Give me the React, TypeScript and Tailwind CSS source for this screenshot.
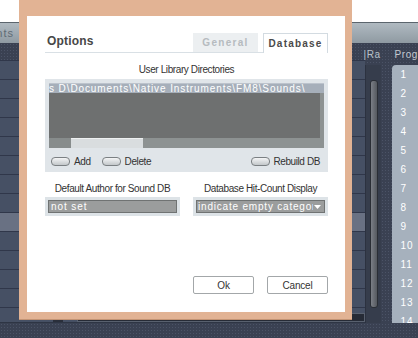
const listRows = Array.from({ length: 14 }, (_, i) => i);
const progNumbers = Array.from({ length: 14 }, (_, i) => i + 1);

const dotted =
  "bg-[#3a4152] bg-[radial-gradient(#4b5366_0.9px,transparent_0.9px)] bg-size-[3px_3px]";

function Pill() {
  return (
    <span className="inline-block w-[19px] h-[9px] rounded-[4px] border border-[#7b8083] bg-gradient-to-b from-[#f4f5f6] to-[#c3c7ca]" />
  );
}

export default function App() {
  return (
    <div className="relative w-[418px] h-[338px] overflow-hidden bg-white font-['Liberation_Sans',Arial,sans-serif]">
      {/* app behind the dialog */}
      <div className="flex flex-col h-full">
        <div className="h-[22px] bg-white" />
        <div className="h-[21px] border-t border-[#5b656d] bg-gradient-to-b from-[#b0bac1] to-[#8f9aa2] flex items-center">
          <div className="w-[19px] overflow-hidden flex justify-end">
            <span className="whitespace-nowrap text-[11px] tracking-[1px] text-[#5f6b74] pr-[5px]">
              Components
            </span>
          </div>
        </div>

        <div className={`flex flex-1 min-h-0 ${dotted}`}>
          {/* left list */}
          <div className="flex flex-col w-[367px]">
            <div className="h-[17px]" />
            <div className="flex-1 overflow-hidden bg-[#465064]">
              {listRows.map((i) => (
                <div
                  key={i}
                  className={`h-[19px] border-t border-[#30374a] ${i === 8 ? "bg-[#697183]" : "bg-[#465064]"}`}
                />
              ))}
            </div>
            <div className="h-[10px] flex bg-[#465064] border-b border-[#2e3544]">
              <div className="ml-[53px] w-[10px] bg-[#2a2f3b]" />
              <div className="ml-[14px] flex-1 bg-[#262b36] border border-[#59616f]" />
            </div>
          </div>

          {/* Ra column */}
          <div className="w-[16px] flex flex-col">
            <div className="h-[22px] flex items-center">
              <span className="-ml-[1px] whitespace-nowrap text-[10px] tracking-[0.6px] text-[#b9c1ca]">|Ra</span>
            </div>
            <div className="flex-1 bg-[#363d4c] border-l border-[#2c3240] pt-[15px] pb-[15px] pl-[4px]">
              <div className="w-[8px] h-full rounded-[3px] border border-[#2a2e35] bg-gradient-to-r from-[#7b7f86] to-[#55595f]" />
            </div>
          </div>

          <div className="w-[12px]" />

          {/* Prog column */}
          <div className="flex-1 flex flex-col">
            <div className="h-[22px] flex items-center pl-[2px]">
              <span className="whitespace-nowrap text-[10px] tracking-[0.6px] text-[#c3cad2]">Prog</span>
            </div>
            <div className="flex-1 overflow-hidden rounded-tl-[4px] bg-[#a6b1bd]">
              {progNumbers.map((n) => (
                <div key={n} className="h-[19px] flex items-center pl-[8px] text-[10px] tracking-[1px] text-white">
                  {n}
                </div>
              ))}
            </div>
          </div>
        </div>

        <div className={`h-[15px] ${dotted}`} />
      </div>

      {/* Options dialog */}
      <div className="absolute left-[19px] top-0 w-[333px] h-[320px] flex bg-[#e2b394] border-b border-[#c39475] pt-[16px] pl-[8px] pr-[7px] pb-[7px]">
        <div className="flex-1 flex flex-col bg-white pl-[18px] pr-[17px] pt-[17px] pb-[18px] text-[10px] tracking-[-0.4px] text-[#333]">
          {/* header with tabs */}
          <div className="h-[20px] flex items-end border-b border-[#d9e0e5]">
            <span className="self-start mt-[1px] ml-[2px] text-[12px] leading-[14px] font-bold tracking-[0.2px] text-[#474747]">
              Options
            </span>
            <div className="ml-auto flex items-end gap-[5px]">
              <div className="w-[65px] h-[19px] flex items-center justify-center bg-[#eceff1] text-[10px] font-bold tracking-[1.3px] text-[#b6bbbf]">
                General
              </div>
              <div className="w-[65px] h-[20px] -mb-px flex items-center justify-center bg-white border border-b-0 border-[#d3dbe1] text-[10px] font-bold tracking-[1.2px] text-[#4a4a4a]">
                Database
              </div>
            </div>
          </div>

          <div className="mt-[11px] leading-[12px] text-center">User Library Directories</div>

          {/* directory list */}
          <div className="mt-[3px] bg-[#e0e5e9] px-[4px] pt-[4px]">
            <div className="h-[65px] flex flex-col">
              <div className="h-[10px] bg-[#a6afba] border-t border-[#bcc3cc] overflow-hidden whitespace-nowrap text-[10px] leading-[9px] tracking-[0.9px] text-white">
                s D\Documents\Native Instruments\FM8\Sounds\
              </div>
              <div className="h-[45px] flex">
                <div className="flex-1 bg-[#6e7070]" />
                <div className="w-[4px] bg-[#8d9292]" />
              </div>
              <div className="h-[10px] flex bg-[#8d9292]">
                <div className="w-[22px] bg-[#878c8c]" />
                <div className="w-[72px] bg-[#d9dddf] border-t border-[#eef0f1]" />
              </div>
            </div>
            <div className="h-[24px] flex items-center pt-[3px] pl-[2px] pr-[4px]">
              <Pill />
              <span className="ml-[4px]">Add</span>
              <span className="ml-[11px] flex items-center">
                <Pill />
              </span>
              <span className="ml-[4px]">Delete</span>
              <span className="ml-auto flex items-center">
                <Pill />
              </span>
              <span className="ml-[3px]">Rebuild DB</span>
            </div>
          </div>

          {/* fields */}
          <div className="mt-[11px] grid grid-cols-2 gap-x-[13px]">
            <div className="flex flex-col">
              <div className="leading-[12px] text-center">Default Author for Sound DB</div>
              <div className="mt-[2px] h-[19px] bg-[#dde3e7] p-[3px]">
                <div className="h-[13px] bg-[#9b9d9d] border border-[#707373] pl-[2px] text-[10px] leading-[11px] tracking-[0.9px] text-white">
                  not set
                </div>
              </div>
            </div>
            <div className="flex flex-col">
              <div className="leading-[12px] text-center">Database Hit-Count Display</div>
              <div className="mt-[2px] h-[19px] bg-[#dde3e7] p-[3px]">
                <div className="h-[13px] flex items-center bg-[#9b9d9d] border border-[#707373] pl-[1px] pr-[3px]">
                  <span className="flex-1 overflow-hidden whitespace-nowrap text-[10px] leading-[11px] tracking-[0.8px] text-white">
                    indicate empty categories
                  </span>
                  <svg width="7" height="4" viewBox="0 0 7 4" className="ml-[1px]">
                    <path d="M0 0h7L3.5 4z" fill="#fff" />
                  </svg>
                </div>
              </div>
            </div>
          </div>

          {/* dialog buttons */}
          <div className="mt-auto flex justify-end gap-[13px]">
            <button className="w-[61px] h-[18px] rounded-[2px] border border-[#a3a7a9] bg-white text-[10px] tracking-[-0.2px] text-[#333]">
              Ok
            </button>
            <button className="w-[61px] h-[18px] rounded-[2px] border border-[#a3a7a9] bg-white text-[10px] tracking-[-0.2px] text-[#333]">
              Cancel
            </button>
          </div>
        </div>
      </div>
    </div>
  );
}
